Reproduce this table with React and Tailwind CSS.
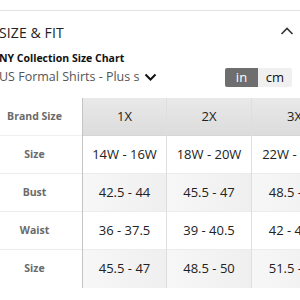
export default function App() {
  const cols = [
    { h: "1X", v: ["14W - 16W", "42.5 - 44", "36 - 37.5", "45.5 - 47"] },
    { h: "2X", v: ["18W - 20W", "45.5 - 47", "39 - 40.5", "48.5 - 50"] },
    { h: "3X", v: ["22W - 24W", "48.5 - 50", "42 - 43.5", "51.5 - 53"] },
  ];
  const labels = ["Size", "Bust", "Waist", "Size"];
  const widths = ["w-[84px]", "w-[85px]", "w-[85px]"];
  return (
    <div className="w-[300px] h-[300px] overflow-hidden bg-white text-[#111]" style={{ fontFamily: '"Open Sans", "Noto Sans", sans-serif' }}>
      <div className="h-[11px] border-b border-[#e3e3e3]" />
      <div className="flex items-center justify-between h-[42px] pr-[8px]">
        <div className="text-[14px] tracking-[0.1px] text-[#222] -ml-[1px]">SIZE &amp; FIT</div>
        <svg width="14" height="10" viewBox="0 0 14 10" className="mt-[-2px] mr-[-2px]">
          <path d="M1.5 8 L7 2.5 L12.5 8" fill="none" stroke="#333" strokeWidth="1.6" />
        </svg>
      </div>
      <div className="text-[10.5px] font-bold leading-[16px] -ml-[1px] text-[#111] mt-[-3px]">NY Collection Size Chart</div>
      <div className="flex items-center justify-between mt-[1px] h-[20px] pr-[8px]">
        <div className="flex items-center -ml-[1px]">
          <span className="text-[12.5px] text-[#555]">US Formal Shirts - Plus s</span>
          <svg width="13" height="10" viewBox="0 0 13 10" className="ml-[5px]">
            <path d="M1.5 2.5 L6.5 7.5 L11.5 2.5" fill="none" stroke="#111" strokeWidth="2" />
          </svg>
        </div>
        <div className="flex h-[19px] text-[13px] leading-[19px]">
          <div className="w-[33px] bg-[#6e6e6e] text-white text-center rounded-l-[2px]">in</div>
          <div className="w-[34px] bg-[#f0f0f0] text-[#111] text-center rounded-r-[2px]">cm</div>
        </div>
      </div>
      <div className="flex mt-[11px]">
        <div className="w-[83px] shrink-0 border-r border-[#c4c4c4] flex flex-col">
          <div className="h-[38px] flex items-center justify-center pr-[13px] text-[10.5px] font-bold text-[#6a6a6a] border-b border-[#f0f0f0]">Brand Size</div>
          {labels.map((l, i) => (
            <div key={i} className={`h-[38px] flex items-center justify-center pr-[13px] text-[10.5px] font-bold text-[#6a6a6a] ${i < 3 ? "border-b border-[#ececec]" : ""}`}>{l}</div>
          ))}
        </div>
        {cols.map((c, ci) => (
          <div key={ci} className={`${widths[ci]} shrink-0 flex flex-col ${ci < 2 ? "border-r border-[#dedede]" : ""}`}>
            <div className="h-[38px] flex items-center justify-center text-[13px] text-[#222] bg-gradient-to-b from-[#e9e9e9] to-[#dcdcdc] border-b border-[#d6d6d6]">{c.h}</div>
            {c.v.map((v, i) => (
              <div key={i} className={`h-[38px] flex items-center justify-center text-[13px] text-[#222] whitespace-nowrap ${i % 2 === 1 ? "bg-gradient-to-r from-[#f7f7f7] to-[#efefef]" : "bg-white"} ${i < 3 ? "border-b border-[#ececec]" : ""}`}>{v}</div>
            ))}
          </div>
        ))}
      </div>
    </div>
  );
}
